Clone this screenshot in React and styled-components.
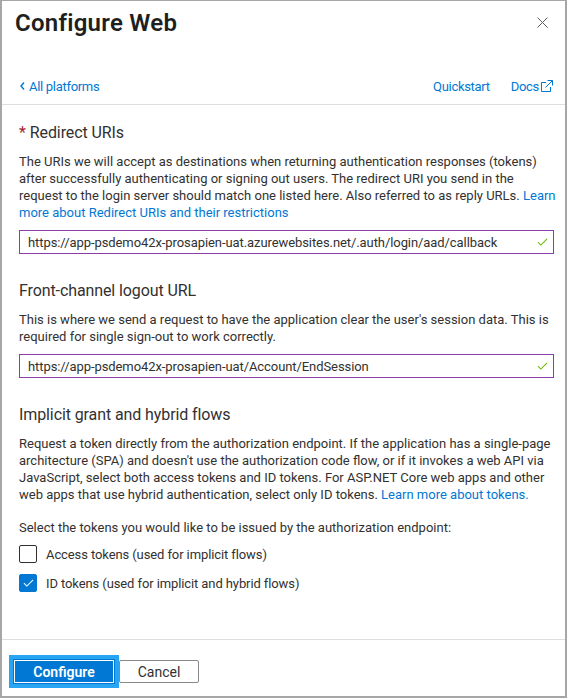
import React from 'react';
import styled, {createGlobalStyle} from 'styled-components';

const GlobalStyle = createGlobalStyle`
body {
  margin: 0;
  font-family: Roboto, "Liberation Sans", sans-serif;
  color: #323130;
}
`;

const Panel = styled.div`
width: 567px;
height: 698px;
box-sizing: border-box;
border-style: solid;
border-color: #a6a6a6;
border-width: 1px 2px 2px 2px;
display: flex;
flex-direction: column;
background: #fff;
`;

const TitleRow = styled.div`
height: 43px;
display: flex;
align-items: center;
justify-content: space-between;
padding: 0 17px 0 13px;
`;

const Title = styled.h1`
margin: 0;
font-size: 24px;
font-weight: 600;
line-height: 32px;
letter-spacing: 0.25px;
color: #201f1e;
`;

const CloseButton = styled.button`
border: 0;
background: none;
padding: 0;
width: 11px;
height: 11px;
display: flex;
`;

const NavRow = styled.div`
margin-top: 26px;
height: 32px;
display: flex;
align-items: center;
justify-content: space-between;
padding: 0 12px 0 18px;
font-size: 13px;
letter-spacing: -0.3px;
`;

const NavGroup = styled.div`
display: flex;
align-items: center;
gap: ${({gap}) => gap || 0}px;
`;

const Link = styled.a`
color: #0078d4;
text-decoration: none;
display: inline-flex;
align-items: center;
gap: ${({gap}) => gap || 0}px;
cursor: pointer;
`;

const InlineLink = styled.span`
color: #0078d4;
cursor: pointer;
`;

const Divider = styled.div`
height: 1px;
background: #e1dfdd;
margin-top: ${({top}) => top || 0}px;
flex-shrink: 0;
`;

const Content = styled.div`
flex: 1;
padding: 0 11px 0 17px;
overflow: hidden;
`;

const Heading = styled.h2`
margin: ${({first}) => (first ? 17 : 26)}px 0 0;
font-size: 16px;
font-weight: 400;
line-height: 22px;
letter-spacing: -0.1px;
`;

const Required = styled.span`
color: #a4262c;
margin-right: 4px;
`;

const Text = styled.p`
margin: ${({top}) => top || 9}px 0 0;
font-size: 13px;
line-height: 17px;
letter-spacing: 0;
white-space: nowrap;
`;

const InputWrap = styled.div`
margin-top: 9px;
height: 24px;
box-sizing: border-box;
border: 1px solid #8a3ca8;
display: flex;
align-items: center;
padding: 0 5px 0 8px;
`;

const Input = styled.input`
flex: 1;
border: 0;
outline: none;
font: inherit;
font-size: 13px;
letter-spacing: -0.08px;
color: #323130;
padding: 0;
background: transparent;
`;

const CheckList = styled.div`
margin-top: 8px;
display: flex;
flex-direction: column;
gap: 9px;
`;

const CheckRow = styled.label`
display: flex;
align-items: center;
gap: 9px;
font-size: 13px;
letter-spacing: -0.1px;
height: 20px;
`;

const Box = styled.span`
width: 18px;
height: 18px;
box-sizing: border-box;
border-radius: 2px;
border: 1px solid ${({checked}) => (checked ? '#0078d4' : '#323130')};
background: ${({checked}) => (checked ? '#0078d4' : '#fff')};
display: flex;
align-items: center;
justify-content: center;
`;

const Footer = styled.div`
height: 56px;
box-sizing: border-box;
padding: 7px 0 0 11px;
display: flex;
align-items: center;
flex-shrink: 0;
`;

const Button = styled.button`
font-family: inherit;
font-size: 14px;
border-radius: 2px;
cursor: pointer;
box-sizing: border-box;
width: ${({primary}) => (primary ? 102 : 80)}px;
height: ${({primary}) => (primary ? 25 : 23)}px;
padding: 0;
${({primary}) => primary ? `
background: #0078d4;
color: #fff;
font-weight: 600;
border: 1px solid #0078d4;
border-radius: 0;
box-shadow: inset 0 0 0 1px #fff;
outline: 4px solid #27a4f2;
` : `
background: #fff;
color: #323130;
border: 1px solid #8a8886;
margin-left: 4px;
`}
`;

const Check = ({color, size = 11}) => (
    <svg width={size} height={size * 0.75} viewBox="0 0 12 9" fill="none">
        <path d="M1 4.6 L4.2 7.8 L11 1" stroke={color} strokeWidth="1.1"/>
    </svg>
);

const App = () => (
    <>
        <GlobalStyle/>
        <Panel>
            <TitleRow>
                <Title>Configure Web</Title>
                <CloseButton aria-label="Close">
                    <svg width="11" height="11" viewBox="0 0 11 11">
                        <path d="M0.5 0.5 L10.5 10.5 M10.5 0.5 L0.5 10.5" stroke="#605e5c" strokeWidth="1"/>
                    </svg>
                </CloseButton>
            </TitleRow>
            <NavRow>
                <Link gap={4}>
                    <svg width="5" height="8" viewBox="0 0 5 8">
                        <path d="M4 0.5 L1 4 L4 7.5" stroke="#0078d4" strokeWidth="1.4" fill="none"/>
                    </svg>
                    All platforms
                </Link>
                <NavGroup gap={21}>
                    <Link>Quickstart</Link>
                    <Link gap={1}>
                        Docs
                        <svg width="13" height="13" viewBox="0 0 13 13" fill="none">
                            <path d="M6 2.5 H1.5 V11.5 H10.5 V7" stroke="#0078d4" strokeWidth="1"/>
                            <path d="M7.5 0.5 H12.5 V5.5 M12.5 0.5 L5.5 7.5" stroke="#0078d4" strokeWidth="1"/>
                        </svg>
                    </Link>
                </NavGroup>
            </NavRow>
            <Divider top={2}/>
            <Content>
                <Heading first><Required>*</Required>Redirect URIs</Heading>
                <Text>
                    The URIs we will accept as destinations when returning authentication responses (tokens)<br/>
                    after successfully authenticating or signing out users. The redirect URI you send in the<br/>
                    request to the login server should match one listed here. Also referred to as reply URLs.{' '}
                    <InlineLink>Learn<br/>more about Redirect URIs and their restrictions</InlineLink>
                </Text>
                <InputWrap>
                    <Input readOnly
                           value="https://app-psdemo42x-prosapien-uat.azurewebsites.net/.auth/login/aad/callback"/>
                    <Check color="#6bb700"/>
                </InputWrap>

                <Heading>Front-channel logout URL</Heading>
                <Text>
                    This is where we send a request to have the application clear the user's session data. This is<br/>
                    required for single sign-out to work correctly.
                </Text>
                <InputWrap>
                    <Input readOnly value="https://app-psdemo42x-prosapien-uat/Account/EndSession"/>
                    <Check color="#6bb700"/>
                </InputWrap>

                <Heading>Implicit grant and hybrid flows</Heading>
                <Text>
                    Request a token directly from the authorization endpoint. If the application has a single-page<br/>
                    architecture (SPA) and doesn't use the authorization code flow, or if it invokes a web API via<br/>
                    JavaScript, select both access tokens and ID tokens. For ASP.NET Core web apps and other<br/>
                    web apps that use hybrid authentication, select only ID tokens.{' '}
                    <InlineLink>Learn more about tokens.</InlineLink>
                </Text>
                <Text top={16}>Select the tokens you would like to be issued by the authorization endpoint:</Text>
                <CheckList>
                    <CheckRow>
                        <Box/>
                        Access tokens (used for implicit flows)
                    </CheckRow>
                    <CheckRow>
                        <Box checked><Check color="#fff" size={11}/></Box>
                        ID tokens (used for implicit and hybrid flows)
                    </CheckRow>
                </CheckList>
            </Content>
            <Divider/>
            <Footer>
                <Button primary>Configure</Button>
                <Button>Cancel</Button>
            </Footer>
        </Panel>
    </>
);

export default App;
